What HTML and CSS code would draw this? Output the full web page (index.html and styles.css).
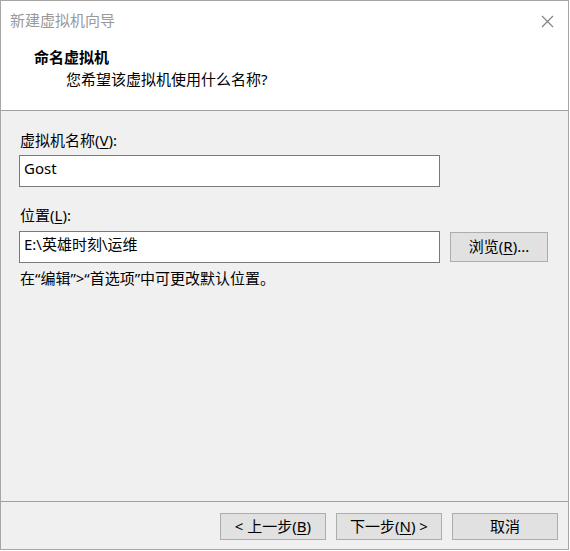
FILE: index.html
```html
<!DOCTYPE html>
<html lang="zh-CN">
<head>
<meta charset="utf-8">
<title>新建虚拟机向导</title>
<link rel="stylesheet" href="styles.css">
</head>
<body>
<div class="window">
  <div class="header">
    <div class="titlebar">
      <span class="title">新建虚拟机向导</span>
      <svg class="close" width="13" height="13" viewBox="0 0 13 13"><path d="M1 1 L12 12 M12 1 L1 12" stroke="#808080" stroke-width="1.1" fill="none"/></svg>
    </div>
    <div class="heading">命名虚拟机</div>
    <div class="subheading">您希望该虚拟机使用什么名称?</div>
  </div>
  <div class="content">
    <div class="label first">虚拟机名称(<u>V</u>):</div>
    <div class="row">
      <div class="input">Gost</div>
    </div>
    <div class="label second">位置(<u>L</u>):</div>
    <div class="row">
      <div class="input">E:\英雄时刻\运维</div>
      <div class="btn browse">浏览(<u>R</u>)...</div>
    </div>
    <div class="hint">在“编辑”&gt;“首选项”中可更改默认位置。</div>
  </div>
  <div class="footer">
    <div class="btn">&lt; 上一步(<u>B</u>)</div>
    <div class="btn">下一步(<u>N</u>) &gt;</div>
    <div class="btn">取消</div>
  </div>
</div>
</body>
</html>
```
FILE: styles.css
```css
html, body {
  margin: 0;
  padding: 0;
  background: #ffffff;
}
body {
  font-family: "Noto Sans", "Noto Sans CJK SC", sans-serif;
  font-size: 15px;
  color: #000;
}
.window {
  box-sizing: border-box;
  width: 569px;
  height: 550px;
  border: 1px solid #a6a6a6;
  background: #f0f0f0;
  display: flex;
  flex-direction: column;
}
.header {
  box-sizing: border-box;
  height: 110px;
  background: #ffffff;
  border-bottom: 1px solid #a0a0a0;
}
.titlebar {
  display: flex;
  align-items: center;
  justify-content: space-between;
  padding: 9px 14px 0 9px;
  height: 20px;
  line-height: 20px;
}
.title {
  color: #999999;
}
.close {
  display: block;
  margin-top: 2px;
}
.heading {
  font-weight: bold;
  line-height: 20px;
  margin-top: 17px;
  padding-left: 33px;
}
.subheading {
  line-height: 20px;
  margin-top: 2px;
  padding-left: 65px;
}
.content {
  padding: 0 0 0 18px;
  flex: 1;
}
.label {
  line-height: 20px;
  padding-left: 1px;
}
.label.first {
  margin-top: 19px;
  margin-bottom: 5px;
}
.label.second {
  margin-top: 18px;
  margin-bottom: 6px;
}
u {
  text-decoration: underline;
  text-underline-offset: 2px;
}
.row {
  display: flex;
  align-items: center;
  gap: 10px;
}
.input {
  box-sizing: border-box;
  width: 421px;
  height: 32px;
  border: 1px solid #7a7a7a;
  background: #ffffff;
  padding: 2px 0 0 4px;
  line-height: 20px;
}
.btn {
  box-sizing: border-box;
  width: 106px;
  height: 27px;
  border: 1px solid #adadad;
  background: #e1e1e1;
  text-align: center;
  line-height: 24px;
}
.browse {
  width: 98px;
  height: 30px;
  line-height: 27px;
}
.hint {
  line-height: 20px;
  margin-top: 5px;
  padding-left: 1px;
}
.footer {
  box-sizing: border-box;
  height: 48px;
  border-top: 1px solid #a0a0a0;
  display: flex;
  justify-content: flex-end;
  gap: 10px;
  padding: 11px 10px 0 0;
}
```
